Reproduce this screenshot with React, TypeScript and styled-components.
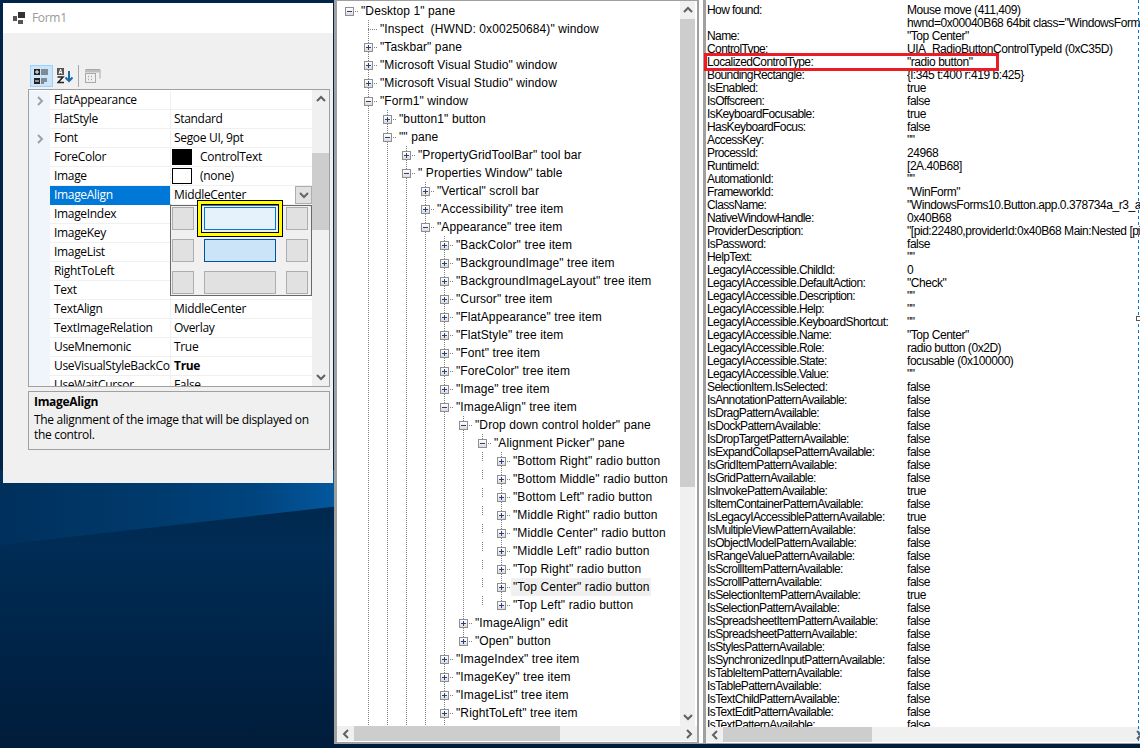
import React from "react";
import styled, { createGlobalStyle } from "styled-components";

const Global = createGlobalStyle`
  html, body { margin: 0; padding: 0; background: #001f3f; }
  #root { width: 1140px; height: 748px; overflow: hidden; }
  * { box-sizing: border-box; }
`;

const FORM_FONT = `"Open Sans", "Noto Sans", sans-serif`;
const TREE_FONT = `"Liberation Sans", Arial, sans-serif`;

const Desktop = styled.main`
  position: relative;
  width: 1140px;
  height: 748px;
  overflow: hidden;
  background: linear-gradient(180deg, #012548 0, #012548 480px, #002c55 545px, #001c3a 748px);
`;
const Streak = styled.div`
  position: absolute;
  left: 0;
  top: 470px;
  width: 340px;
  height: 80px;
  clip-path: polygon(0 0, 100% 0, 100% 36px, 0 75px);
  background: linear-gradient(90deg, #00305c 0, #003a6c 45%, #00447e 75%, #0459a0 100%);
`;

/* ---------- Form window ---------- */
const FormWindow = styled.section`
  position: absolute;
  left: 3px;
  top: 3px;
  width: 330px;
  height: 480px;
  display: flex;
  flex-direction: column;
  background: #f0f0f0;
  font: 12px/16px ${FORM_FONT};
  letter-spacing: -0.32px;
  color: #000;
`;
const TitleBar = styled.header`
  height: 30px;
  flex: none;
  display: flex;
  align-items: center;
  gap: 6px;
  padding: 0 0 0 10px;
  background: #fff;
  color: #999;
`;
const FormBody = styled.div`
  flex: 1;
  display: flex;
  flex-direction: column;
  padding: 32px 3px 0 25px;
`;
const Toolbar = styled.div`
  height: 24px;
  flex: none;
  display: flex;
  align-items: flex-start;
  padding-left: 2px;
  gap: 1px;
`;
const ToolButton = styled.div<{ $active?: boolean }>`
  width: ${(p) => (p.$active ? 23 : 22)}px;
  height: 22px;
  display: flex;
  align-items: center;
  justify-content: center;
  background: ${(p) => (p.$active ? "#cce4f7" : "transparent")};
  border: 1px solid ${(p) => (p.$active ? "#99d1ff" : "transparent")};
`;
const ToolSep = styled.div`
  width: 1px;
  height: 22px;
  background: #a8a8a8;
  margin: 0 2px 0 1px;
`;
const Grid = styled.div`
  position: relative;
  height: 298px;
  flex: none;
  display: flex;
  background: #fff;
  border: 1px solid #a0a0a0;
  overflow: hidden;
`;
const GridRows = styled.div`
  flex: 1;
  min-width: 0;
  padding-top: 1px;
  overflow: hidden;
`;
const GridRow = styled.div`
  height: 19px;
  display: flex;
  background: #fff;
`;
const Gutter = styled.div`
  width: 21px;
  flex: none;
  background: #f0f5fb;
  display: flex;
  align-items: center;
  justify-content: center;
`;
const PropName = styled.div<{ $selected?: boolean }>`
  width: 121px;
  flex: none;
  padding-left: 4px;
  white-space: nowrap;
  overflow: hidden;
  line-height: 18px;
  background: ${(p) => (p.$selected ? "#0078d7" : "#fff")};
  color: ${(p) => (p.$selected ? "#fff" : "#000")};
  border-bottom: 1px solid ${(p) => (p.$selected ? "#0078d7" : "#f0f0f0")};
  border-right: 1px solid #f0f0f0;
`;
const PropValue = styled.div<{ $bold?: boolean }>`
  flex: 1;
  min-width: 0;
  display: flex;
  align-items: flex-start;
  padding-left: 3px;
  line-height: 18px;
  white-space: nowrap;
  font-weight: ${(p) => (p.$bold ? 700 : 400)};
  border-bottom: 1px solid #f0f0f0;
`;
const Swatch = styled.span<{ $color: string }>`
  width: 20px;
  height: 16px;
  flex: none;
  margin: 1px 8px 0 -2px;
  background: ${(p) => p.$color};
  border: 1px solid #000;
`;
const ComboButton = styled.span`
  width: 17px;
  height: 18px;
  margin-left: auto;
  flex: none;
  display: flex;
  align-items: center;
  justify-content: center;
  background: #e1e1e1;
  border: 1px solid #adadad;
`;
const GridScroll = styled.div`
  width: 17px;
  flex: none;
  display: flex;
  flex-direction: column;
  background: #f0f0f0;
`;
const ArrowCell = styled.div`
  flex: none;
  width: 100%;
  height: 18px;
  display: flex;
  align-items: center;
  justify-content: center;
`;
const GridTrack = styled.div`
  flex: 1;
  padding-top: 45px;
`;
const GridThumb = styled.div`
  height: 77px;
  background: #cdcdcd;
`;
const Picker = styled.div`
  position: absolute;
  left: 141px;
  top: 115px;
  width: 142px;
  height: 91px;
  padding: 1px 2px 0 1px;
  display: grid;
  grid-template-columns: 22px 72px 22px;
  grid-template-rows: 23px 23px 23px;
  column-gap: 10px;
  row-gap: 9px;
  background: #f0f0f0;
  border: 1px solid #696969;
`;
const PickerCell = styled.div<{ $state?: "hover" | "pressed" }>`
  position: relative;
  background: ${(p) =>
    p.$state === "hover" ? "#e5f1fb" : p.$state === "pressed" ? "#cce4f7" : "#e1e1e1"};
  border: 1px solid
    ${(p) =>
      p.$state === "hover" ? "#0078d7" : p.$state === "pressed" ? "#005499" : "#adadad"};
`;
const Highlight = styled.div`
  position: absolute;
  left: -8px;
  top: -8px;
  width: 86px;
  height: 37px;
  border: 1px solid #000;
  background: transparent;
  box-shadow: inset 0 0 0 3px #ffff00, inset 0 0 0 4px #000;
`;
const Description = styled.div`
  margin-top: 4px;
  height: 59px;
  flex: none;
  padding: 2px 5px;
  border: 1px solid #a0a0a0;
  line-height: 15px;
`;
const DescTitle = styled.div`
  font-weight: 700;
  margin-bottom: 3px;
`;

/* ---------- Inspect window ---------- */
const InspectWindow = styled.section`
  position: absolute;
  left: 334px;
  top: 0;
  width: 806px;
  height: 744px;
  display: flex;
  gap: 4px;
  background: #fff;
  border-bottom: 1px solid #a0a0a0;
`;
const TreePane = styled.div`
  width: 365px;
  flex: none;
  display: flex;
  flex-direction: column;
  border: 2px solid #a0a0a0;
  border-left-width: 3px;
  border-bottom-width: 1px;
  border-top-width: 1px;
  background: #fff;
  padding-bottom: 1px;
`;
const PaneMain = styled.div`
  flex: 1;
  min-height: 0;
  display: flex;
  padding-right: 2px;
`;
const TreeList = styled.ul`
  flex: 1;
  min-width: 0;
  margin: 0;
  padding: 1px 0 0 3px;
  list-style: none;
  overflow: hidden;
  font: 12px/18px ${TREE_FONT};
  letter-spacing: 0.1px;
  color: #000;
`;
const TreeRow = styled.li`
  height: 18px;
  display: flex;
  white-space: pre;
`;
const dotsV = `repeating-linear-gradient(to bottom, #7f7f7f 0 1px, transparent 1px 2px)`;
const dotsH = `repeating-linear-gradient(to right, #7f7f7f 0 1px, transparent 1px 2px)`;
const Guide = styled.span<{ $line: "none" | "full" | "half"; $stub?: boolean }>`
  width: 19px;
  height: 18px;
  flex: none;
  display: flex;
  align-items: center;
  justify-content: center;
  background-repeat: no-repeat;
  background-image: ${(p) =>
    [p.$line !== "none" ? dotsV : null, p.$stub ? dotsH : null].filter(Boolean).join(",") || "none"};
  background-size: ${(p) =>
    [
      p.$line === "full" ? "1px 18px" : p.$line === "half" ? "1px 9px" : null,
      p.$stub ? "10px 1px" : null,
    ]
      .filter(Boolean)
      .join(",") || "auto"};
  background-position: ${(p) =>
    [p.$line !== "none" ? "9px 0" : null, p.$stub ? "9px 9px" : null].filter(Boolean).join(",") || "0 0"};
`;
const Expander = styled.span`
  width: 9px;
  height: 9px;
  margin-top: 1px;
  flex: none;
  display: block;
  background: linear-gradient(180deg, #fff, #dcdcdc);
  border: 1px solid #8f8f8f;
`;
const NodeLabel = styled.span<{ $selected?: boolean }>`
  height: 18px;
  padding: 0 2px;
  background: ${(p) => (p.$selected ? "#f0f0f0" : "transparent")};
`;
const VScroll = styled.div`
  width: 15px;
  flex: none;
  display: flex;
  flex-direction: column;
  background: #f0f0f0;
`;
const VTrack = styled.div`
  flex: 1;
  min-height: 0;
`;
const VThumb = styled.div`
  height: 468px;
  background: #cdcdcd;
`;
const HScroll = styled.div<{ $overrun?: number }>`
  height: 15px;
  flex: none;
  display: flex;
  align-items: stretch;
  margin-right: ${(p) => -(p.$overrun ?? 0)}px;
  background: #f0f0f0;
`;
const HArrow = styled.div`
  width: 17px;
  flex: none;
  display: flex;
  align-items: center;
  justify-content: center;
`;
const HTrack = styled.div`
  flex: 1;
  min-width: 0;
`;
const HThumb = styled.div<{ $w: number }>`
  width: ${(p) => p.$w}px;
  height: 100%;
  background: #cdcdcd;
`;
const DetailPane = styled.div`
  position: relative;
  flex: 1;
  min-width: 0;
  display: flex;
  flex-direction: column;
  border-left: 3px solid #a0a0a0;
  padding-bottom: 1px;
`;
const DetailList = styled.div`
  flex: 1;
  min-height: 0;
  overflow: hidden;
  padding-top: 4px;
  font: 12px/13px ${TREE_FONT};
  color: #000;
`;
const DetailRow = styled.div`
  height: 13px;
  display: flex;
  white-space: nowrap;
`;
const DetailKey = styled.span`
  width: 201px;
  flex: none;
  padding-left: 1px;
  letter-spacing: -0.6px;
`;
const DetailVal = styled.span`
  flex: none;
  letter-spacing: -0.45px;
`;
const RedBox = styled.div`
  position: absolute;
  left: -2px;
  top: 53px;
  width: 295px;
  height: 18px;
  border: 3px solid #ed1c24;
`;
const DashLine = styled.div`
  position: absolute;
  right: 1px;
  top: 0;
  bottom: 2px;
  width: 1px;
  background: repeating-linear-gradient(to bottom, #0078d7 0 3px, transparent 3px 6px);
`;
const DashHandle = styled.div`
  position: absolute;
  right: -1px;
  top: 316px;
  width: 5px;
  height: 5px;
  background: #fff;
  border: 1px solid #555;
`;

/* ---------- Icons ---------- */
const Chevron = ({ dir, color = "#606060" }: { dir: "up" | "down" | "left" | "right"; color?: string }) => {
  const pts = {
    up: "1,7 5,3 9,7",
    down: "1,3 5,7 9,3",
    left: "7,1 3,5 7,9",
    right: "3,1 7,5 3,9",
  }[dir];
  return (
    <svg width="10" height="10" viewBox="0 0 10 10" fill="none">
      <polyline points={pts} stroke={color} strokeWidth="2" />
    </svg>
  );
};

const FormIcon = () => (
  <svg width="13" height="12" viewBox="0 0 13 12">
    <rect x="0" y="4" width="4" height="5" fill="#555" />
    <rect x="5" y="0" width="7" height="6" fill="#333" />
    <rect x="5" y="8" width="5" height="4" fill="#555" />
  </svg>
);
const CategoryIcon = () => (
  <svg width="15" height="15" viewBox="0 0 15 15">
    <rect x="0" y="0" width="6" height="6" fill="#222" />
    <rect x="0" y="9" width="6" height="6" fill="#222" />
    <path d="M1 3h4M3 1v4M1 12h4" stroke="#fff" strokeWidth="1" />
    <path d="M7 1h7M7 3h7M7 5h7M7 10h6M7 12h6M7 14h3" stroke="#333" strokeWidth="1" />
  </svg>
);
const SortIcon = () => (
  <svg width="16" height="16" viewBox="0 0 16 16">
    <rect x="0" y="0" width="7" height="7" fill="#555" />
    <path d="M2 6l1.5-5 1.5 5M2.5 4.5h2" stroke="#fff" strokeWidth="1" fill="none" />
    <path d="M0.5 9h5.5L1 14.5h6" stroke="#222" strokeWidth="1.6" fill="none" />
    <path d="M12 3v10" stroke="#1b6aa5" strokeWidth="2" />
    <path d="M8.5 9.5L12 13l3.5-3.5" stroke="#1b6aa5" strokeWidth="2" fill="none" />
  </svg>
);
const PagesIcon = () => (
  <svg width="16" height="14" viewBox="0 0 16 14" fill="none">
    <path d="M0.5 0.5h14.5v9" stroke="#a8a8a8" />
    <rect x="0" y="1" width="15" height="2.5" fill="#bdbdbd" />
    <rect x="0.5" y="4.5" width="10" height="9" stroke="#a8a8a8" />
    <path d="M3 7.5h1M6 7.5h1M3 10.5h1M6 10.5h1" stroke="#a8a8a8" strokeWidth="1.4" />
  </svg>
);
const PlusMinus = ({ minus }: { minus: boolean }) => (
  <svg width="7" height="7" viewBox="0 0 7 7" style={{ display: "block" }}>
    <path d="M1 3.5h5" stroke="#2b3f80" strokeWidth="1" />
    {!minus && <path d="M3.5 1v5" stroke="#2b3f80" strokeWidth="1" />}
  </svg>
);

/* ---------- Data ---------- */
type Prop = {
  name: string;
  value?: string;
  expand?: boolean;
  swatch?: string;
  bold?: boolean;
  selected?: boolean;
};
const props: Prop[] = [
  { name: "FlatAppearance", expand: true },
  { name: "FlatStyle", value: "Standard" },
  { name: "Font", value: "Segoe UI, 9pt", expand: true },
  { name: "ForeColor", value: "ControlText", swatch: "#000" },
  { name: "Image", value: "(none)", swatch: "#fff" },
  { name: "ImageAlign", value: "MiddleCenter", selected: true },
  { name: "ImageIndex" },
  { name: "ImageKey" },
  { name: "ImageList" },
  { name: "RightToLeft" },
  { name: "Text" },
  { name: "TextAlign", value: "MiddleCenter" },
  { name: "TextImageRelation", value: "Overlay" },
  { name: "UseMnemonic", value: "True" },
  { name: "UseVisualStyleBackCo", value: "True", bold: true },
  { name: "UseWaitCursor", value: "False" },
];

type Node = { level: number; text: string; kind: "plus" | "minus" | "leaf" | "tail"; selected?: boolean };
const n = (level: number, text: string, kind: Node["kind"] = "plus", selected = false): Node => ({
  level,
  text,
  kind,
  selected,
});
const nodes: Node[] = [
  n(0, '"Desktop 1" pane', "minus"),
  n(1, '"Inspect  (HWND: 0x00250684)" window', "leaf"),
  n(1, '"Taskbar" pane'),
  n(1, '"Microsoft Visual Studio" window'),
  n(1, '"Microsoft Visual Studio" window'),
  n(1, '"Form1" window', "minus"),
  n(2, '"button1" button'),
  n(2, '"" pane', "minus"),
  n(3, '"PropertyGridToolBar" tool bar'),
  n(3, '" Properties Window" table', "minus"),
  n(4, '"Vertical" scroll bar'),
  n(4, '"Accessibility" tree item'),
  n(4, '"Appearance" tree item', "minus"),
  n(5, '"BackColor" tree item'),
  n(5, '"BackgroundImage" tree item'),
  n(5, '"BackgroundImageLayout" tree item'),
  n(5, '"Cursor" tree item'),
  n(5, '"FlatAppearance" tree item'),
  n(5, '"FlatStyle" tree item'),
  n(5, '"Font" tree item'),
  n(5, '"ForeColor" tree item'),
  n(5, '"Image" tree item'),
  n(5, '"ImageAlign" tree item', "minus"),
  n(6, '"Drop down control holder" pane', "minus"),
  n(7, '"Alignment Picker" pane', "minus"),
  n(8, '"Bottom Right" radio button'),
  n(8, '"Bottom Middle" radio button'),
  n(8, '"Bottom Left" radio button'),
  n(8, '"Middle Right" radio button'),
  n(8, '"Middle Center" radio button'),
  n(8, '"Middle Left" radio button'),
  n(8, '"Top Right" radio button'),
  n(8, '"Top Center" radio button', "plus", true),
  n(8, '"Top Left" radio button'),
  n(6, '"ImageAlign" edit'),
  n(6, '"Open" button'),
  n(5, '"ImageIndex" tree item'),
  n(5, '"ImageKey" tree item'),
  n(5, '"ImageList" tree item'),
  n(5, '"RightToLeft" tree item'),
  n(5, "", "tail"),
];

const lineFor = (index: number, level: number): "none" | "full" | "half" => {
  if (level === 0) return "none";
  for (let j = index + 1; j < nodes.length; j++) {
    if (nodes[j].level < level) return "half";
    if (nodes[j].level === level) return "full";
  }
  return "full";
};

const details: [string, string][] = [
  ["How found:", "Mouse move (411,409)"],
  ["", 'hwnd=0x00040B68 64bit class="WindowsForms10.Button.app.0.378734a_r3_ad1"'],
  ["Name:", '"Top Center"'],
  ["ControlType:", "UIA_RadioButtonControlTypeId (0xC35D)"],
  ["LocalizedControlType:", '"radio button"'],
  ["BoundingRectangle:", "{l:345 t:400 r:419 b:425}"],
  ["IsEnabled:", "true"],
  ["IsOffscreen:", "false"],
  ["IsKeyboardFocusable:", "true"],
  ["HasKeyboardFocus:", "false"],
  ["AccessKey:", '""'],
  ["ProcessId:", "24968"],
  ["RuntimeId:", "[2A.40B68]"],
  ["AutomationId:", '""'],
  ["FrameworkId:", '"WinForm"'],
  ["ClassName:", '"WindowsForms10.Button.app.0.378734a_r3_ad1"'],
  ["NativeWindowHandle:", "0x40B68"],
  ["ProviderDescription:", '"[pid:22480,providerId:0x40B68 Main:Nested [pid:24968,providerId:0x40B68]"'],
  ["IsPassword:", "false"],
  ["HelpText:", '""'],
  ["LegacyIAccessible.ChildId:", "0"],
  ["LegacyIAccessible.DefaultAction:", '"Check"'],
  ["LegacyIAccessible.Description:", '""'],
  ["LegacyIAccessible.Help:", '""'],
  ["LegacyIAccessible.KeyboardShortcut:", '""'],
  ["LegacyIAccessible.Name:", '"Top Center"'],
  ["LegacyIAccessible.Role:", "radio button (0x2D)"],
  ["LegacyIAccessible.State:", "focusable (0x100000)"],
  ["LegacyIAccessible.Value:", '""'],
  ["SelectionItem.IsSelected:", "false"],
  ["IsAnnotationPatternAvailable:", "false"],
  ["IsDragPatternAvailable:", "false"],
  ["IsDockPatternAvailable:", "false"],
  ["IsDropTargetPatternAvailable:", "false"],
  ["IsExpandCollapsePatternAvailable:", "false"],
  ["IsGridItemPatternAvailable:", "false"],
  ["IsGridPatternAvailable:", "false"],
  ["IsInvokePatternAvailable:", "true"],
  ["IsItemContainerPatternAvailable:", "false"],
  ["IsLegacyIAccessiblePatternAvailable:", "true"],
  ["IsMultipleViewPatternAvailable:", "false"],
  ["IsObjectModelPatternAvailable:", "false"],
  ["IsRangeValuePatternAvailable:", "false"],
  ["IsScrollItemPatternAvailable:", "false"],
  ["IsScrollPatternAvailable:", "false"],
  ["IsSelectionItemPatternAvailable:", "true"],
  ["IsSelectionPatternAvailable:", "false"],
  ["IsSpreadsheetItemPatternAvailable:", "false"],
  ["IsSpreadsheetPatternAvailable:", "false"],
  ["IsStylesPatternAvailable:", "false"],
  ["IsSynchronizedInputPatternAvailable:", "false"],
  ["IsTableItemPatternAvailable:", "false"],
  ["IsTablePatternAvailable:", "false"],
  ["IsTextChildPatternAvailable:", "false"],
  ["IsTextEditPatternAvailable:", "false"],
  ["IsTextPatternAvailable:", "false"],
];

const pickerStates: ("hover" | "pressed" | undefined)[] = [
  undefined, "hover", undefined,
  undefined, "pressed", undefined,
  undefined, undefined, undefined,
];

export default function App() {
  return (
    <Desktop>
      <Global />
      <Streak />
      <FormWindow>
        <TitleBar>
          <FormIcon />
          <span>Form1</span>
        </TitleBar>
        <FormBody>
          <Toolbar>
            <ToolButton $active>
              <CategoryIcon />
            </ToolButton>
            <ToolButton>
              <SortIcon />
            </ToolButton>
            <ToolSep />
            <ToolButton>
              <PagesIcon />
            </ToolButton>
          </Toolbar>
          <Grid>
            <GridRows>
              {props.map((p) => (
                <GridRow key={p.name}>
                  <Gutter>{p.expand && <Chevron dir="right" color="#a0a0a0" />}</Gutter>
                  <PropName $selected={p.selected}>{p.name}</PropName>
                  <PropValue $bold={p.bold}>
                    {p.swatch && <Swatch $color={p.swatch} />}
                    {p.value}
                    {p.selected && (
                      <ComboButton>
                        <Chevron dir="down" color="#666" />
                      </ComboButton>
                    )}
                  </PropValue>
                </GridRow>
              ))}
            </GridRows>
            <GridScroll>
              <ArrowCell>
                <Chevron dir="up" />
              </ArrowCell>
              <GridTrack>
                <GridThumb />
              </GridTrack>
              <ArrowCell>
                <Chevron dir="down" />
              </ArrowCell>
            </GridScroll>
            <Picker>
              {pickerStates.map((s, i) => (
                <PickerCell key={i} $state={s}>
                  {s === "hover" && <Highlight />}
                </PickerCell>
              ))}
            </Picker>
          </Grid>
          <Description>
            <DescTitle>ImageAlign</DescTitle>
            The alignment of the image that will be displayed on the control.
          </Description>
        </FormBody>
      </FormWindow>

      <InspectWindow>
        <TreePane>
          <PaneMain>
            <TreeList>
              {nodes.map((node, i) => (
                <TreeRow key={i}>
                  {Array.from({ length: node.level }, (_, l) => (
                    <Guide key={l} $line={lineFor(i, l)} />
                  ))}
                  {node.kind === "tail" ? (
                    <Guide $line="full" />
                  ) : (
                    <Guide $line={lineFor(i, node.level)} $stub>
                      {node.kind !== "leaf" && (
                        <Expander>
                          <PlusMinus minus={node.kind === "minus"} />
                        </Expander>
                      )}
                    </Guide>
                  )}
                  {node.text && <NodeLabel $selected={node.selected}>{node.text}</NodeLabel>}
                </TreeRow>
              ))}
            </TreeList>
            <VScroll>
              <ArrowCell>
                <Chevron dir="up" />
              </ArrowCell>
              <VTrack>
                <VThumb />
              </VTrack>
              <ArrowCell>
                <Chevron dir="down" />
              </ArrowCell>
            </VScroll>
          </PaneMain>
          <HScroll>
            <HArrow>
              <Chevron dir="left" />
            </HArrow>
            <HTrack>
              <HThumb $w={206} />
            </HTrack>
            <HArrow>
              <Chevron dir="right" />
            </HArrow>
          </HScroll>
        </TreePane>
        <DetailPane>
          <DetailList>
            {details.map(([k, v], i) => (
              <DetailRow key={i}>
                <DetailKey>{k}</DetailKey>
                <DetailVal>{v}</DetailVal>
              </DetailRow>
            ))}
          </DetailList>
          <HScroll $overrun={7}>
            <HArrow>
              <Chevron dir="left" />
            </HArrow>
            <HTrack>
              <HThumb $w={149} />
            </HTrack>
            <HArrow>
              <Chevron dir="right" />
            </HArrow>
          </HScroll>
          <RedBox />
          <DashLine />
          <DashHandle />
        </DetailPane>
      </InspectWindow>
    </Desktop>
  );
}
